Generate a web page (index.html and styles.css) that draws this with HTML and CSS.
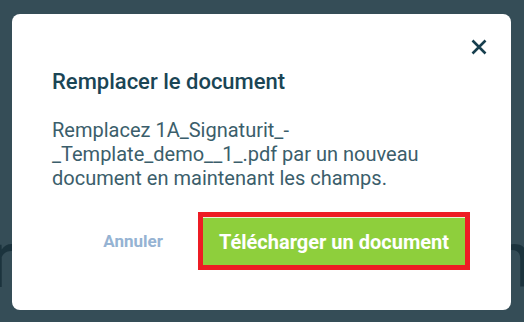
FILE: index.html
```html
<!DOCTYPE html>
<html lang="fr">
<head>
<meta charset="utf-8">
<link rel="stylesheet" href="styles.css">
</head>
<body>
<div class="page">
  <span class="page-letter">r</span>
  <span class="page-letter">n</span>
</div>
<div class="overlay">
  <div class="modal" role="dialog">
    <div class="modal-top">
      <button class="close" aria-label="Fermer">
        <svg width="16" height="16" viewBox="0 0 16 16"><path d="M1.5 1.5 L14.5 14.5 M14.5 1.5 L1.5 14.5" stroke="#173f4e" stroke-width="2.6" fill="none"/></svg>
      </button>
    </div>
    <h2 class="title">Remplacer le document</h2>
    <p class="body">Remplacez 1A_Signaturit_-_Template_demo__1_.pdf par un nouveau document en maintenant les champs.</p>
    <div class="actions">
      <button class="btn-cancel">Annuler</button>
      <div class="highlight">
        <button class="btn-primary">Télécharger un document</button>
      </div>
    </div>
  </div>
</div>
</body>
</html>
```
FILE: styles.css
```css
html, body {
  margin: 0;
  padding: 0;
  width: 524px;
  height: 322px;
  overflow: hidden;
  background: #354d57;
  font-family: Roboto, "Liberation Sans", sans-serif;
}
.page {
  height: 322px;
  display: flex;
  justify-content: space-between;
  align-items: flex-start;
  padding: 0 9px 0 0;
  box-sizing: border-box;
  overflow: hidden;
}
.page-letter {
  margin-top: 210px;
  font-size: 80px;
  line-height: 100px;
  color: #1b333d;
}
.page-letter:first-child {
  margin-left: -11px;
}
.page-letter:last-child {
  margin-right: -18px;
}
.overlay {
  position: absolute;
  inset: 0;
}
.modal {
  position: absolute;
  left: 12px;
  top: 14px;
  width: 499px;
  height: 296px;
  box-sizing: border-box;
  background: #fff;
  border-radius: 8px;
  padding: 0 40px;
}
.modal-top {
  display: flex;
  justify-content: flex-end;
  padding-top: 24px;
  margin-right: -16px;
  height: 17px;
}
.close {
  border: 0;
  background: none;
  padding: 0;
  width: 17px;
  height: 17px;
  display: flex;
  align-items: center;
  justify-content: center;
}
.title {
  margin: 14px 0 0;
  font-size: 22px;
  font-weight: 500;
  color: #1a4555;
  line-height: 26px;
}
.body {
  margin: 23px 0 0;
  font-size: 20px;
  line-height: 24px;
  color: #3b5e6b;
  width: 400px;
}
.actions {
  display: flex;
  justify-content: flex-end;
  align-items: center;
  gap: 35px;
  margin-top: 22px;
  margin-right: 1px;
}
.btn-cancel {
  border: 0;
  background: none;
  font-family: inherit;
  font-size: 17px;
  font-weight: 700;
  color: #95b3d3;
  padding: 0;
}
.highlight {
  border: 5px solid #ed1c24;
  display: flex;
}
.btn-primary {
  border: 0;
  border-top: 1px solid #e6f3d6;
  background: #8ecf3c;
  color: #fff;
  font-family: inherit;
  font-size: 20px;
  font-weight: 700;
  width: 262px;
  height: 48px;
  padding: 0;
}
```
